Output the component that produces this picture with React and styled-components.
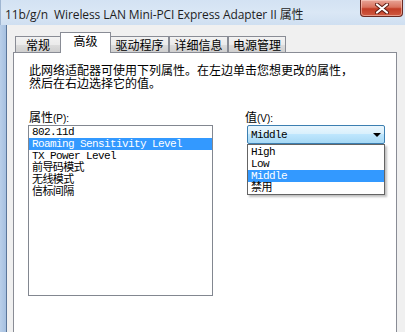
import React from 'react'
import styled, { createGlobalStyle } from 'styled-components'

const GlobalStyle = createGlobalStyle`
  html, body {
    margin: 0;
    padding: 0;
    background: #f0f0f0;
  }
`

const cjk = `"Noto Sans CJK SC", "Noto Sans", sans-serif`
const mono = `"Liberation Mono", "Noto Sans CJK SC", monospace`

const tabs = [
  { label: '常规', width: 46 },
  { label: '高级', width: 51, active: true },
  { label: '驱动程序', width: 59 },
  { label: '详细信息', width: 59 },
  { label: '电源管理', width: 58 },
]

const properties = [
  '802.11d',
  'Roaming Sensitivity Level',
  'TX Power Level',
  '前导码模式',
  '无线模式',
  '信标间隔',
]

const values = ['High', 'Low', 'Middle', '禁用']

const App = () => {
  return (
    <>
      <GlobalStyle />
      <Window>
        <TitleBar>
          <Title>{'11b/g/n  Wireless LAN Mini-PCI Express Adapter II 属性'}</Title>
          <CloseButton>
            <svg width="14" height="11" viewBox="0 0 14 11">
              <path d="M2 1.5 L12 9.5 M12 1.5 L2 9.5" stroke="#5a1a12" strokeWidth="4" strokeLinecap="round" />
              <path d="M2 1.5 L12 9.5 M12 1.5 L2 9.5" stroke="#ffffff" strokeWidth="2.2" strokeLinecap="round" />
            </svg>
          </CloseButton>
        </TitleBar>
        <Body>
          <FrameEdge />
          <Content>
            <TabStrip>
              {tabs.map((t) => (
                <Tab key={t.label} $active={t.active} $width={t.width}>
                  {t.label}
                </Tab>
              ))}
            </TabStrip>
            <Panel>
              <Description>
                <DescLine>此网络适配器可使用下列属性。在左边单击您想更改的属性，</DescLine>
                <DescLine>然后在右边选择它的值。</DescLine>
              </Description>
              <Columns>
                <LeftColumn>
                  <FieldLabel>
                    属性<Hint>(P):</Hint>
                  </FieldLabel>
                  <ListBox>
                    {properties.map((p, i) => (
                      <ListItem key={p} $selected={i === 1}>
                        {p}
                      </ListItem>
                    ))}
                  </ListBox>
                </LeftColumn>
                <RightColumn>
                  <FieldLabel>
                    值<Hint>(V):</Hint>
                  </FieldLabel>
                  <ComboWrap>
                    <Combo>
                      <span>Middle</span>
                      <Arrow />
                    </Combo>
                    <DropList>
                      {values.map((v) => (
                        <ListItem key={v} $selected={v === 'Middle'}>
                          {v}
                        </ListItem>
                      ))}
                    </DropList>
                  </ComboWrap>
                </RightColumn>
              </Columns>
            </Panel>
          </Content>
        </Body>
      </Window>
    </>
  )
}

const Window = styled.div`
  width: 405px;
  height: 332px;
  overflow: hidden;
  display: flex;
  flex-direction: column;
  background: #f0f0f0;
`

const TitleBar = styled.div`
  height: 25px;
  flex-shrink: 0;
  display: flex;
  align-items: flex-start;
  justify-content: space-between;
  background: linear-gradient(to bottom, #d3e2f3 0%, #dae7f5 50%, #cfdff1 100%);
  border-left: 1px solid #9fb6d2;
  box-sizing: border-box;
`

const Title = styled.div`
  font-family: "Open Sans", "Noto Sans CJK SC", sans-serif;
  font-size: 12px;
  color: #1e1e1e;
  white-space: pre;
  padding: 5px 0 0 4px;
  letter-spacing: -0.1px;
`

const CloseButton = styled.div`
  width: 43px;
  height: 17px;
  margin-right: 2px;
  box-sizing: border-box;
  display: flex;
  align-items: center;
  justify-content: center;
  border: 1px solid #6b2a22;
  border-top: none;
  border-radius: 0 0 4px 4px;
  background: linear-gradient(to bottom, #e8a497 0%, #d9735f 45%, #c23d26 55%, #cf5a41 100%);
  box-shadow: inset 0 0 0 1px rgba(255, 220, 210, 0.5);
`

const Body = styled.div`
  flex: 1;
  display: flex;
  min-height: 0;
`

const FrameEdge = styled.div`
  width: 6px;
  flex-shrink: 0;
  background: linear-gradient(to right, #b9cfe9, #a6c0e0);
  border-right: 1px solid #5b7699;
`

const Content = styled.div`
  flex: 1;
  display: flex;
  flex-direction: column;
  padding: 7px 8px 0 6px;
  background: #f0f0f0;
  min-width: 0;
`

const TabStrip = styled.div`
  display: flex;
  align-items: flex-end;
  height: 21px;
  padding-left: 2px;
  margin-bottom: -1px;
  position: relative;
  z-index: 1;
`

const Tab = styled.div`
  width: ${(p) => p.$width}px;
  height: ${(p) => (p.$active ? 21 : 17)}px;
  box-sizing: border-box;
  border: 1px solid #898c95;
  border-bottom: ${(p) => (p.$active ? 'none' : '1px solid #898c95')};
  margin-left: ${(p) => (p.$active ? -1 : 0)}px;
  margin-right: ${(p) => (p.$active ? -1 : 0)}px;
  position: relative;
  z-index: ${(p) => (p.$active ? 2 : 0)};
  background: ${(p) =>
    p.$active ? '#ffffff' : 'linear-gradient(to bottom, #f2f2f2 0%, #ebebeb 50%, #dddddd 51%, #cfcfcf 100%)'};
  font-family: ${cjk};
  font-size: 12px;
  line-height: ${(p) => (p.$active ? 16 : 15)}px;
  color: #000;
  text-align: center;
  white-space: nowrap;
`

const Panel = styled.div`
  flex: 1;
  border: 1px solid #898c95;
  border-bottom: none;
  background: #ffffff;
  padding: 10px 0 0 14px;
`

const Description = styled.div`
  display: flex;
  flex-direction: column;
  padding-left: 1px;
`

const DescLine = styled.div`
  font-family: ${cjk};
  font-size: 12px;
  line-height: 13px;
  height: 13px;
  color: #000;
  white-space: nowrap;
`

const Columns = styled.div`
  display: flex;
  margin-top: 20px;
`

const LeftColumn = styled.div`
  width: 185px;
  display: flex;
  flex-direction: column;
`

const RightColumn = styled.div`
  width: 141px;
  margin-left: 31px;
  display: flex;
  flex-direction: column;
`

const FieldLabel = styled.div`
  font-family: ${cjk};
  font-size: 12px;
  line-height: 16px;
  height: 16px;
  color: #000;
  padding-left: 1px;
`

const Hint = styled.span`
  font-family: "Liberation Sans", sans-serif;
  font-size: 10px;
`

const ListBox = styled.div`
  height: 171px;
  box-sizing: border-box;
  border: 1px solid #828790;
  background: #fff;
`

const ListItem = styled.div`
  height: 12px;
  line-height: 12px;
  padding-left: 3px;
  font-family: ${mono};
  font-size: 11px;
  letter-spacing: -0.6px;
  white-space: nowrap;
  color: ${(p) => (p.$selected ? '#ffffff' : '#000000')};
  background: ${(p) => (p.$selected ? '#3399ff' : 'transparent')};
`

const ComboWrap = styled.div`
  position: relative;
  margin-left: 3px;
  width: 138px;
`

const Combo = styled.div`
  height: 19px;
  box-sizing: border-box;
  border: 1px solid #3c7fb1;
  border-radius: 2px;
  background: linear-gradient(to bottom, #eaf6fd 0%, #d9f0fc 45%, #bee6fd 50%, #a7d9f5 100%);
  display: flex;
  align-items: center;
  justify-content: space-between;
  padding: 0 3px 0 3px;
  font-family: ${mono};
  font-size: 11px;
  letter-spacing: -0.6px;
  color: #000;
`

const Arrow = styled.div`
  width: 0;
  height: 0;
  border-left: 4px solid transparent;
  border-right: 4px solid transparent;
  border-top: 4px solid #000;
`

const DropList = styled.div`
  position: absolute;
  top: 19px;
  left: 0;
  width: 138px;
  height: 51px;
  box-sizing: border-box;
  border: 1px solid #646464;
  background: #fff;
  padding-top: 1px;
  box-shadow: 2px 2px 2px rgba(0, 0, 0, 0.25);
  z-index: 5;
`

export default App
